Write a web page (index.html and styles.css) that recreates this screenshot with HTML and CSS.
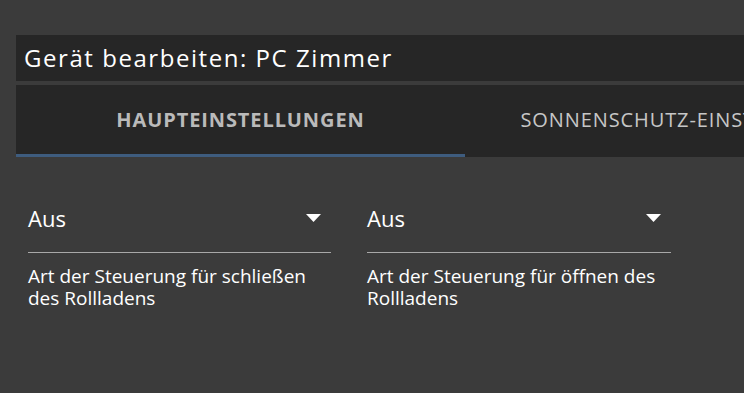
FILE: index.html
```html
<!DOCTYPE html>
<html lang="de">
  <head>
    <meta charset="utf-8" />
    <meta name="viewport" content="width=device-width, initial-scale=1" />
    <title>Gerät bearbeiten</title>
    <link rel="stylesheet" href="styles.css">
  </head>
  <body>
    <div class="dialog">
      <div class="dialog__title">Gerät bearbeiten: PC Zimmer</div>
      <div class="tabs">
        <div class="tab tab--active">Haupteinstellungen</div>
        <div class="tab">Sonnenschutz-Einstellungen</div>
      </div>
      <div class="form">
        <div class="field">
          <div class="select">
            <span class="select__value">Aus</span>
            <svg class="select__arrow" width="15" height="8" viewBox="0 0 15 8">
              <polygon points="0,0 15,0 7.5,8" fill="#fff" />
            </svg>
          </div>
          <div class="field__help">Art der Steuerung für schließen des Rollladens</div>
        </div>
        <div class="field">
          <div class="select">
            <span class="select__value">Aus</span>
            <svg class="select__arrow" width="15" height="8" viewBox="0 0 15 8">
              <polygon points="0,0 15,0 7.5,8" fill="#fff" />
            </svg>
          </div>
          <div class="field__help">Art der Steuerung für öffnen des Rollladens</div>
        </div>
      </div>
    </div>
  </body>
</html>
```

FILE: styles.css
```css
:root {
  --color-bg: #3b3b3b;
  --color-panel: #262626;
  --color-accent: #3e5c7e;
  --color-text: #ffffff;
  --color-tab: #bababa;
  --color-line: #a8a8a8;
}

html,
body {
  margin: 0;
  height: 100%;
  overflow: hidden;
}
body {
  background: var(--color-bg);
  font-family: "Open Sans", "Noto Sans", sans-serif;
  color: var(--color-text);
}

.dialog {
  padding: 35px 0 0 16px;
  width: 900px;
}
.dialog__title {
  background: var(--color-panel);
  height: 46px;
  line-height: 46px;
  padding-left: 8px;
  font-size: 24px;
  letter-spacing: 1.55px;
  margin-bottom: 4px;
}

.tabs {
  display: flex;
  background: var(--color-panel);
  height: 72px;
  overflow: hidden;
}
.tab {
  position: relative;
  width: 449px;
  height: 72px;
  flex: none;
  text-align: center;
  line-height: 70px;
  font-size: 20px;
  letter-spacing: 0.9px;
  text-transform: uppercase;
  color: #c6c6c6;
  white-space: nowrap;
}
.tab--active {
  font-weight: 700;
  color: var(--color-tab);
}
.tab--active::after {
  content: "";
  position: absolute;
  left: 0;
  right: 0;
  bottom: 0;
  height: 3px;
  background: var(--color-accent);
}
.tab + .tab {
  text-indent: 6px;
}

.form {
  display: grid;
  grid-template-columns: 303px 304px;
  column-gap: 36px;
  padding: 46px 12px 0;
}
.select {
  display: flex;
  align-items: center;
  justify-content: space-between;
  height: 30px;
  padding: 0 10px 19px 0;
  border-bottom: 1px solid var(--color-line);
}
.select__value {
  font-size: 22px;
  line-height: 30px;
}
.select__arrow {
  display: block;
}
.field__help {
  margin-top: 12px;
  font-size: 19px;
  line-height: 22px;
}
```
